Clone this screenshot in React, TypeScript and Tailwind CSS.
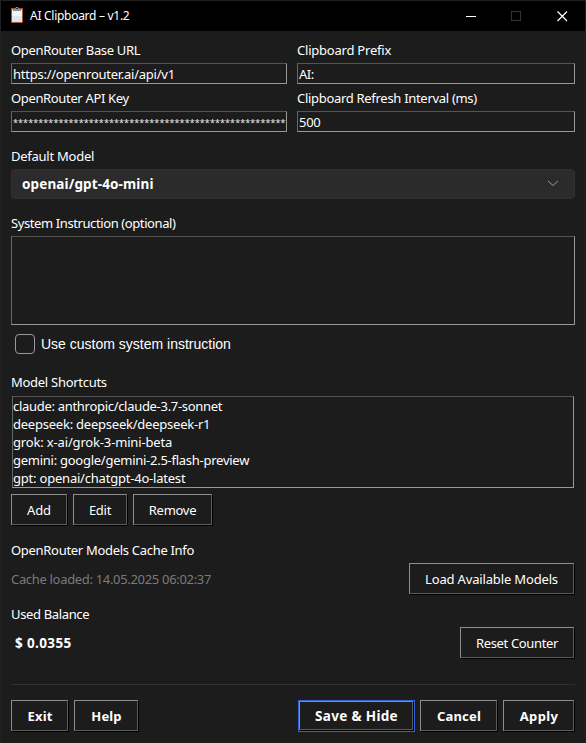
import type { ReactNode } from "react";

function Label({ children, className = "" }: { children: ReactNode; className?: string }) {
  return <div className={`h-[18px] whitespace-nowrap leading-[18px] ${className}`}>{children}</div>;
}

function Field({ label, value, className = "", valueClass = "", labelClass = "" }: { label: string; value: string; className?: string; valueClass?: string; labelClass?: string }) {
  return (
    <div className={className}>
      <Label className={labelClass}>{label}</Label>
      <div className="mt-1 flex h-[21px] overflow-hidden border border-t-[#555] border-l-[#666] border-r-[#999] border-b-[#999] pl-px leading-[21px] whitespace-nowrap">
        <span className={valueClass}>{value}</span>
      </div>
    </div>
  );
}

function Button({ children, className = "" }: { children: ReactNode; className?: string }) {
  return (
    <button className={`flex h-[31px] shrink-0 items-center justify-center border border-t-[#8e8e8e] border-l-[#8e8e8e] border-r-[#5c5c5c] border-b-[#5c5c5c] pt-[2px] whitespace-nowrap shadow-[1px_1px_0_#000] ${className}`}>
      {children}
    </button>
  );
}

function ClipboardIcon() {
  return (
    <svg width="14" height="17" viewBox="0 0 14 17" className="mb-px ml-[10px]">
      <path d="M0 1h12v15H0z" fill="#a5502a" />
      <path d="M1 2.500h10v12.500H1z" fill="#f0f5f6" />
      <path d="M1 9h10v6H1z" fill="#dce8ec" />
      <path d="M2 2h2l1-2h2l1 2h2v2H2z" fill="#8b9194" />
      <path d="M5 1h2v1H5z" fill="#303436" />
    </svg>
  );
}

/* Resize grip sitting on the window's top or bottom edge */
function Grip({ className }: { className: string }) {
  return (
    <svg className={`absolute left-[271px] ${className}`} width="14" height="1" viewBox="0 0 14 1">
      <path d="M0 .5h2M3 .5h2M9 .5h2M12 .5h2" stroke="#666" />
    </svg>
  );
}

const shortcuts = [
  { text: "claude: anthropic/claude-3.7-sonnet", cls: "tracking-[-0.3px]" },
  { text: "deepseek: deepseek/deepseek-r1", cls: "tracking-[-0.23px]" },
  { text: "grok: x-ai/grok-3-mini-beta", cls: "tracking-[-0.16px]" },
  { text: "gemini: google/gemini-2.5-flash-preview", cls: "tracking-[-0.26px]" },
  { text: "gpt: openai/chatgpt-4o-latest", cls: "tracking-[-0.21px]" },
];

export default function App() {
  return (
    <div className="relative flex h-[743px] w-[586px] flex-col overflow-hidden border border-[#202020] bg-[#1c1c1c] font-['Noto_Sans','Open_Sans',sans-serif] text-[13px] tracking-[-0.28px] text-white">
      <Grip className="-top-px" />
      <Grip className="-bottom-px" />
      <header className="flex h-[30px] shrink-0 items-center bg-black">
        <ClipboardIcon />
        <span className="ml-[5px] text-[12px] tracking-[-0.28px]">AI Clipboard – v1.2</span>
        <svg className="ml-auto mr-[16px]" width="103" height="12" viewBox="0 0 103 12" fill="none" shapeRendering="crispEdges">
          <path d="M0 6.5h10" stroke="#fff" />
          <path d="M45.500 1.500h9v9h-9z" stroke="#333" />
          <path d="M91.500 1.500l9.500 9.500M101 1.500L91.500 11" stroke="#fff" strokeWidth="1.2" shapeRendering="auto" />
        </svg>
      </header>

      <main className="flex flex-col pr-[10px] pl-[10px]">
        <div className="mt-[10px] flex gap-[10px]">
          <Field label="OpenRouter Base URL" value="https://openrouter.ai/api/v1" className="w-[276px]" labelClass="tracking-[-0.32px]" valueClass="tracking-[-0.25px]" />
          <Field label="Clipboard Prefix" value="AI:" className="w-[278px]" labelClass="tracking-[-0.22px]" valueClass="tracking-[-0.5px]" />
        </div>
        <div className="mt-[5px] flex gap-[10px]">
          <Field label="OpenRouter API Key" value={"*".repeat(54)} className="w-[276px]" labelClass="tracking-[-0.35px]" valueClass="text-[9px] leading-[21px] tracking-[0.09px] text-[#eee]" />
          <Field label="Clipboard Refresh Interval (ms)" value="500" className="w-[278px]" labelClass="tracking-[-0.3px]" />
        </div>

        <Label className="mt-[15px] tracking-[-0.25px]">Default Model</Label>
        <div className="mt-[4px] flex h-[30px] w-[564px] items-center justify-between rounded-[4px] border border-[#303030] bg-[#2b2b2b] pr-[15px] pl-[10px] font-bold">
          <span className="mt-px text-[13.5px] tracking-[0.13px]">openai/gpt-4o-mini</span>
          <svg width="12" height="7" viewBox="0 0 12 7" fill="none" className="mb-[2px]"><path d="M1 1l5 4.500L11 1" stroke="#999" /></svg>
        </div>

        <Label className="mt-[15px] tracking-[-0.4px]">System Instruction (optional)</Label>
        <div className="mt-[4px] h-[89px] w-[564px] border border-t-[#555] border-l-[#666] border-r-[#999] border-b-[#999]" />
        <div className="mt-[9px] flex h-[20px] items-center pl-[4px]">
          <div className="size-[20px] rounded-[4px] border border-[#999]" />
          <span className="ml-[6px] font-['Liberation_Sans',sans-serif] text-[14px] tracking-normal">Use custom system instruction</span>
        </div>

        <Label className="mt-[19px]">Model Shortcuts</Label>
        <ul className="mt-[5px] ml-px h-[92px] w-[562px] border border-t-[#555] border-l-[#666] border-r-[#999] border-b-[#999]">
          {shortcuts.map((s) => (
            <li key={s.text} className="h-[18px] leading-[19px]"><span className={s.cls}>{s.text}</span></li>
          ))}
        </ul>
        <div className="mt-[6px] flex gap-[6px]">
          <Button className="w-[56px] tracking-[-0.1px]">Add</Button>
          <Button className="w-[54px]">Edit</Button>
          <Button className="w-[79px]">Remove</Button>
        </div>

        <Label className="mt-[16px] tracking-[-0.3px]">OpenRouter Models Cache Info</Label>
        <div className="mt-[4px] flex h-[31px] w-[563px] items-center justify-between">
          <span className="mt-[2px] tracking-[-0.32px] text-[#7a7a7a]">Cache loaded: 14.05.2025 06:02:37</span>
          <Button className="w-[165px] tracking-[-0.16px]">Load Available Models</Button>
        </div>
        <Label className="mt-[11px] tracking-[-0.35px]">Used Balance</Label>
        <div className="mt-[4px] flex h-[31px] w-[563px] items-center justify-between">
          <span className="mt-[2px] ml-[4px] text-[13.5px] font-bold tracking-[0.37px]">$ 0.0355</span>
          <Button className="w-[114px] tracking-[-0.35px]">Reset Counter</Button>
        </div>

        <div className="mt-[26px] h-px w-[564px] bg-[#303030]" />
        <footer className="mt-[15px] flex w-[563px] font-bold tracking-[0.15px]">
          <Button className="w-[57px] pl-px">Exit</Button>
          <Button className="ml-[6px] w-[64px] pl-px">Help</Button>
          <div className="ml-auto h-[32px] w-[117px] border border-[#2f62df]">
            <Button className="h-[29px]! w-[114px] pl-px text-[13.5px] tracking-[0.33px]">Save &amp; Hide</Button>
          </div>
          <Button className="ml-[5px] w-[77px] pl-px">Cancel</Button>
          <Button className="ml-[6px] w-[71px] pl-px tracking-[0.4px]">Apply</Button>
        </footer>
      </main>
    </div>
  );
}
